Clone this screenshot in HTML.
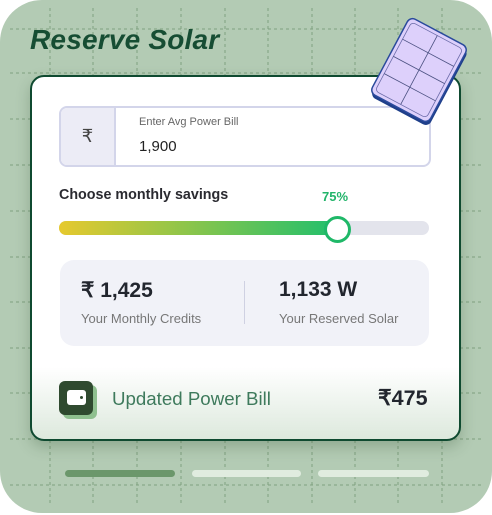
<!DOCTYPE html>
<html><head><style>
*{margin:0;padding:0;box-sizing:border-box}
body{width:492px;height:515px;background:#fff;font-family:"Liberation Sans",sans-serif;position:relative;overflow:hidden}
.bg{position:absolute;left:0;top:0;width:492px;height:513px;background:#b3cbb4;border-radius:42px;overflow:hidden}
.abs{position:absolute}
.title{left:30px;top:24px;font-size:28px;font-weight:bold;font-style:italic;color:#164d33;letter-spacing:0.2px}
.card{left:30px;top:75px;width:431px;height:366px;border:2.5px solid #0f4a30;border-radius:14px;background:linear-gradient(#fff 0,#fff 290px,#dde9dd 100%);box-shadow:0 6px 14px rgba(40,70,40,.25)}
</style></head><body>
<div class="bg">
<svg class="abs" style="left:0;top:0" width="492" height="513">
<g stroke="#7fa07f" stroke-width="1" stroke-dasharray="3,3" fill="none">
<line x1="50" y1="8" x2="50" y2="505"/><line x1="93" y1="8" x2="93" y2="505"/><line x1="137" y1="8" x2="137" y2="505"/><line x1="181" y1="8" x2="181" y2="505"/><line x1="225" y1="8" x2="225" y2="505"/><line x1="268" y1="8" x2="268" y2="505"/><line x1="312" y1="8" x2="312" y2="505"/><line x1="355" y1="8" x2="355" y2="505"/><line x1="398" y1="8" x2="398" y2="505"/><line x1="442" y1="8" x2="442" y2="505"/>
<line x1="10" y1="29" x2="482" y2="29"/><line x1="10" y1="73" x2="482" y2="73"/><line x1="10" y1="119" x2="482" y2="119"/><line x1="10" y1="165" x2="482" y2="165"/><line x1="10" y1="211" x2="482" y2="211"/><line x1="10" y1="257" x2="482" y2="257"/><line x1="10" y1="302" x2="482" y2="302"/><line x1="10" y1="348" x2="482" y2="348"/><line x1="10" y1="393" x2="482" y2="393"/><line x1="10" y1="439" x2="482" y2="439"/><line x1="10" y1="485" x2="482" y2="485"/>
</g></svg>
</div>
<div class="abs title">Reserve Solar</div>
<div class="abs card"></div>
<div class="abs" style="left:59px;top:106px;width:372px;height:61px;border:2px solid #d3d5ea;border-radius:8px;background:#fff;overflow:hidden">
<div class="abs" style="left:0;top:0;width:55px;height:57px;background:#ececf6;border-right:2px solid #d3d5ea;text-align:center;line-height:57px;font-size:18px;color:#444">₹</div>
<div class="abs" style="left:78px;top:8px;font-size:11px;color:#666">Enter Avg Power Bill</div>
<div class="abs" style="left:78px;top:30px;font-size:15px;color:#222">1,900</div>
</div>
<div class="abs" style="left:59px;top:187px;font-size:14.3px;font-weight:bold;color:#2a2a30">Choose monthly savings</div>
<div class="abs" style="left:322px;top:189px;font-size:13px;font-weight:bold;color:#22b46a">75%</div>
<div class="abs" style="left:59px;top:221px;width:370px;height:14px;border-radius:7px;background:#e3e4ec"></div>
<div class="abs" style="left:59px;top:221px;width:280px;height:14px;border-radius:7px;background:linear-gradient(90deg,#e6c92e,#8ec54a 45%,#1fbf6d)"></div>
<div class="abs" style="left:324px;top:216px;width:27px;height:27px;border-radius:50%;background:#fff;border:3px solid #1fb868"></div>
<div class="abs" style="left:60px;top:260px;width:369px;height:86px;border-radius:14px;background:#f1f2f8"></div>
<div class="abs" style="left:244px;top:281px;width:1px;height:43px;background:#cfd1e2"></div>
<div class="abs" style="left:81px;top:278px;font-size:21px;font-weight:bold;color:#22262e">₹ 1,425</div>
<div class="abs" style="left:81px;top:311px;font-size:13px;color:#777">Your Monthly Credits</div>
<div class="abs" style="left:279px;top:278px;font-size:21px;font-weight:bold;color:#22262e">1,133 W</div>
<div class="abs" style="left:279px;top:311px;font-size:13px;color:#777">Your Reserved Solar</div>
<div class="abs" style="left:63px;top:385px;width:34px;height:34px;border-radius:6px;background:#8fc08f"></div>
<div class="abs" style="left:59px;top:381px;width:34px;height:34px;border-radius:6px;background:#2f4a2f"></div>
<div class="abs" style="left:67px;top:390px;width:19px;height:15px;border-radius:3px;background:#fff"></div>
<div class="abs" style="left:80px;top:396px;width:3px;height:3px;border-radius:50%;background:#2f4a2f"></div>
<div class="abs" style="left:112px;top:388px;font-size:18.7px;color:#3e7a5c">Updated Power Bill</div>
<div class="abs" style="left:378px;top:386px;font-size:21.5px;font-weight:bold;color:#22262e">₹475</div>
<div class="abs" style="left:65px;top:470px;width:110px;height:7px;border-radius:4px;background:#6b976b"></div>
<div class="abs" style="left:192px;top:470px;width:109px;height:7px;border-radius:4px;background:#e0ecdf"></div>
<div class="abs" style="left:318px;top:470px;width:111px;height:7px;border-radius:4px;background:#e0ecdf"></div>
<svg class="abs" style="left:0;top:0" width="492" height="515">
<g transform="translate(419,70) rotate(28)">
<rect x="-31" y="-40" width="66" height="86" rx="6" fill="#1f3f8a"/>
<rect x="-33" y="-43" width="66" height="86" rx="6" fill="#ddd0fb" stroke="#2a4a9c" stroke-width="1.5"/>
<rect x="-29" y="-39" width="58" height="78" rx="4" fill="none" stroke="#6a6aa8" stroke-width="0.8"/>
<g stroke="#4a5080" stroke-width="0.8"><line x1="0" y1="-39" x2="0" y2="39"/><line x1="-29" y1="-19.5" x2="29" y2="-19.5"/><line x1="-29" y1="0" x2="29" y2="0"/><line x1="-29" y1="19.5" x2="29" y2="19.5"/></g>
</g></svg>
</body></html>
